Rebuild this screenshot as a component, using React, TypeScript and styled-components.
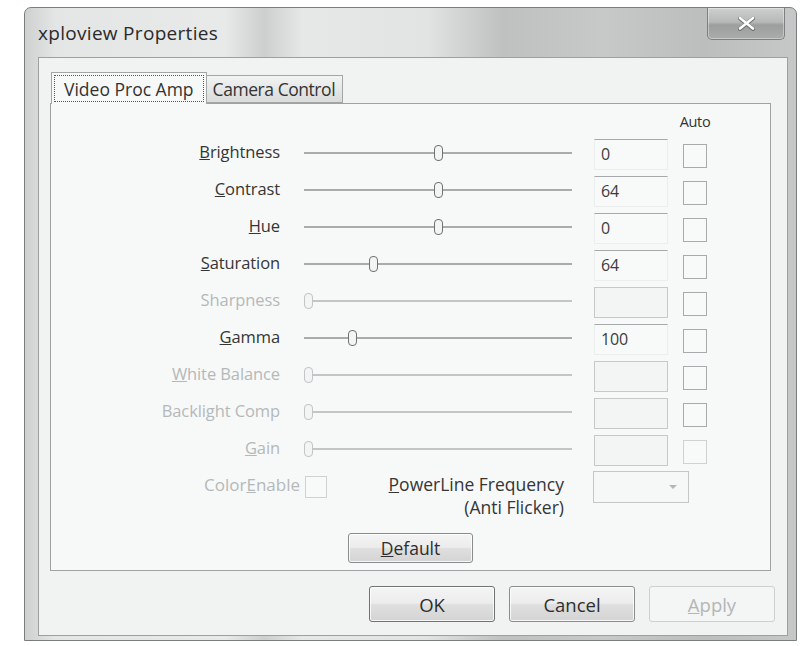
import React from "react";
import styled, { createGlobalStyle } from "styled-components";

const Global = createGlobalStyle`
  html, body { margin: 0; padding: 0; background: #ffffff; }
  body {
    width: 801px;
    height: 646px;
    overflow: hidden;
    font-family: "Open Sans", "Noto Sans", sans-serif;
  }
  * { box-sizing: border-box; }
`;

const Window = styled.div`
  margin: 7px 0 0 24px;
  width: 773px;
  height: 634px;
  border: 1px solid #7a7d7d;
  border-radius: 7px 7px 0 0;
  background: linear-gradient(
    90deg,
    #cfd1d1 0%,
    #e4e5e5 4%,
    #e8e9e9 26%,
    #cdcfcf 31%,
    #e6e7e7 36%,
    #e2e3e3 52%,
    #bfc1c1 62%,
    #c7c9c9 75%,
    #bcbebe 88%,
    #c6c8c8 100%
  );
  display: flex;
  flex-direction: column;
  padding: 0 8px 4px 13px;
  overflow: hidden;
`;

const TitleBar = styled.div`
  height: 49px;
  flex-shrink: 0;
  display: flex;
  justify-content: space-between;
  align-items: flex-start;
`;

const Title = styled.div`
  margin-top: 13px;
  font-size: 19px;
  line-height: 24px;
  color: #2a2a2a;
  letter-spacing: 0.3px;
`;

const CloseButton = styled.div`
  margin-right: 3px;
  width: 78px;
  height: 32px;
  border: 1px solid #7d8080;
  border-top: none;
  border-radius: 0 0 5px 5px;
  background: linear-gradient(180deg, #cdcfcf 0%, #b7b9b9 45%, #9c9e9e 55%, #abadad 100%);
  box-shadow: inset 0 0 0 1px rgba(255, 255, 255, 0.35);
  display: flex;
  align-items: center;
  justify-content: center;
`;

const Client = styled.div`
  width: 750px;
  flex: 1;
  border: 1px solid #9ca0a0;
  background: #f1f3f3;
  padding: 14px 16px 0 11px;
  display: flex;
  flex-direction: column;
`;

const TabStrip = styled.div`
  height: 31px;
  display: flex;
  align-items: flex-end;
  padding-left: 1px;
`;

const Tab = styled.div<{ $active?: boolean }>`
  position: relative;
  z-index: ${(p) => (p.$active ? 1 : 0)};
  height: ${(p) => (p.$active ? "32px" : "28px")};
  margin-bottom: ${(p) => (p.$active ? "-1px" : "0")};
  padding: ${(p) => (p.$active ? "2px" : "0 7px 0 6px")};
  border: 1px solid #a3a6a6;
  border-bottom: ${(p) => (p.$active ? "none" : "1px solid #a3a6a6")};
  border-left: ${(p) => (p.$active ? "1px solid #a3a6a6" : "none")};
  background: ${(p) =>
    p.$active ? "#f7f9f9" : "linear-gradient(180deg, #f2f3f3 0%, #e6e7e7 50%, #d9dbdb 100%)"};
  font-size: 17.5px;
  letter-spacing: ${(p) => (p.$active ? "0px" : "-0.45px")};
  color: #333;
  display: flex;
  align-items: center;
  white-space: nowrap;
`;

const FocusRect = styled.div`
  height: 100%;
  padding: 0 9px;
  border: 1px dotted #555;
  display: flex;
  align-items: center;
`;

const Panel = styled.div`
  width: 721px;
  height: 468px;
  flex-shrink: 0;
  border: 1px solid #9ea2a2;
  background: #f7f9f9;
  padding: 8px 0 0 0;
  display: flex;
  flex-direction: column;
`;

const Grid = styled.div`
  display: grid;
  grid-template-columns: 249px 294px 89px 24px;
  height: 31px;
`;

const HeaderGrid = styled(Grid)`
  height: 20px;
  margin-bottom: 7px;
`;

const AutoHead = styled.div`
  grid-column: 4;
  justify-self: center;
  font-size: 14.5px;
  line-height: 20px;
  color: #333;
  white-space: nowrap;
  letter-spacing: -0.3px;
`;

const Rows = styled.div`
  display: flex;
  flex-direction: column;
  gap: 6px;
`;

const Label = styled.div<{ $disabled?: boolean }>`
  align-self: center;
  margin-bottom: 5px;
  padding-right: 20px;
  text-align: right;
  font-size: 16.5px;
  line-height: 22px;
  letter-spacing: -0.1px;
  color: ${(p) => (p.$disabled ? "#b5b8b8" : "#353535")};
  white-space: nowrap;
`;

const SliderCell = styled.div`
  align-self: center;
  margin-bottom: 3px;
  padding: 0 22px 0 4px;
`;

const Track = styled.div<{ $disabled?: boolean }>`
  position: relative;
  height: 16px;
  &::before {
    content: "";
    position: absolute;
    left: 0;
    right: 0;
    top: 7px;
    height: 2px;
    background: ${(p) => (p.$disabled ? "#c3c6c6" : "#a9acac")};
  }
`;

const Thumb = styled.div<{ $disabled?: boolean }>`
  position: absolute;
  top: 0;
  width: 9px;
  height: 16px;
  border: 1.5px solid ${(p) => (p.$disabled ? "#c2c5c5" : "#6f7272")};
  border-radius: 4px;
  background: #f3f4f4;
`;

const ValueBox = styled.div<{ $disabled?: boolean }>`
  width: 74px;
  height: 31px;
  border: 1px solid ${(p) => (p.$disabled ? "#c6c9c9" : "#eceeee")};
  border-top: 1px solid ${(p) => (p.$disabled ? "#c6c9c9" : "#a6a9a9")};
  background: ${(p) => (p.$disabled ? "#f3f5f5" : "#f8fafa")};
  padding: 0 0 0 6px;
  font-size: 16px;
  line-height: 29px;
  color: #3c3c3c;
  letter-spacing: -0.2px;
`;

const CheckBox = styled.div<{ $disabled?: boolean; $size?: number }>`
  margin-top: 5px;
  width: ${(p) => p.$size ?? 24}px;
  height: ${(p) => p.$size ?? 24}px;
  border: 1.5px solid ${(p) => (p.$disabled ? "#cfd2d2" : "#a8abab")};
  background: #f8f9f9;
`;

const BottomRow = styled.div`
  margin-top: 5px;
  height: 48px;
  display: flex;
  align-items: flex-start;
`;

const ColorGroup = styled.div`
  width: 276px;
  display: flex;
  justify-content: flex-end;
  gap: 5px;
`;

const SmallLabel = styled.div<{ $disabled?: boolean }>`
  margin-top: 3px;
  font-size: 17px;
  line-height: 22px;
  letter-spacing: 0px;
  color: ${(p) => (p.$disabled ? "#b5b8b8" : "#353535")};
  white-space: nowrap;
`;

const PowerLabel = styled.div`
  width: 237px;
  margin-top: 2px;
  text-align: right;
  font-size: 17.5px;
  line-height: 23px;
  letter-spacing: 0px;
  color: #353535;
  white-space: nowrap;
`;

const Dropdown = styled.div`
  margin-left: 29px;
  width: 96px;
  height: 32px;
  border: 1px solid #c4c7c7;
  background: #f6f7f7;
  display: flex;
  align-items: center;
  justify-content: flex-end;
  padding-right: 11px;
`;

const Arrow = styled.div`
  width: 0;
  height: 0;
  border-left: 4px solid transparent;
  border-right: 4px solid transparent;
  border-top: 4px solid #b4b7b7;
`;

const CenterRow = styled.div`
  margin-top: 14px;
  display: flex;
  justify-content: center;
`;

const Button = styled.div<{ $w?: number; $h?: number; $disabled?: boolean; $default?: boolean; $fs?: number }>`
  width: ${(p) => p.$w ?? 126}px;
  height: ${(p) => p.$h ?? 36}px;
  border: 1px solid ${(p) => (p.$disabled ? "#cdd0d0" : p.$default ? "#6f7373" : "#8a8d8d")};
  border-radius: 3px;
  box-shadow: ${(p) =>
    p.$disabled ? "none" : "inset 0 0 0 1px rgba(255,255,255,0.8)"};
  background: ${(p) =>
    p.$disabled
      ? "#f4f5f5"
      : "linear-gradient(180deg, #f4f4f4 0%, #ececec 48%, #dfdfdf 52%, #d4d4d4 100%)"};
  display: flex;
  align-items: center;
  justify-content: center;
  font-size: ${(p) => p.$fs ?? 18.5}px;
  letter-spacing: 0px;
  color: ${(p) => (p.$disabled ? "#b3b6b6" : "#2e2e2e")};
`;

const ButtonRow = styled.div`
  margin-top: 15px;
  margin-right: -4px;
  display: flex;
  justify-content: flex-end;
  gap: 14px;
`;

type RowData = {
  label: string;
  mnemonic: number;
  value: string;
  pos: number;
  enabled: boolean;
  autoDisabled?: boolean;
};

const rows: RowData[] = [
  { label: "Brightness", mnemonic: 0, value: "0", pos: 0.5, enabled: true },
  { label: "Contrast", mnemonic: 0, value: "64", pos: 0.5, enabled: true },
  { label: "Hue", mnemonic: 0, value: "0", pos: 0.5, enabled: true },
  { label: "Saturation", mnemonic: 0, value: "64", pos: 0.25, enabled: true },
  { label: "Sharpness", mnemonic: -1, value: "", pos: 0, enabled: false },
  { label: "Gamma", mnemonic: 0, value: "100", pos: 0.168, enabled: true },
  { label: "White Balance", mnemonic: 0, value: "", pos: 0, enabled: false },
  { label: "Backlight Comp", mnemonic: -1, value: "", pos: 0, enabled: false },
  { label: "Gain", mnemonic: 0, value: "", pos: 0, enabled: false, autoDisabled: true },
];

function Mnemonic({ text, index }: { text: string; index: number }) {
  if (index < 0) return <>{text}</>;
  return (
    <>
      {text.slice(0, index)}
      <u>{text[index]}</u>
      {text.slice(index + 1)}
    </>
  );
}

function Slider({ pos, disabled }: { pos: number; disabled: boolean }) {
  return (
    <Track $disabled={disabled}>
      <Thumb $disabled={disabled} style={{ left: `calc(${pos} * (100% - 9px))` }} />
    </Track>
  );
}

function CloseGlyph() {
  return (
    <svg width="19" height="15" viewBox="0 0 19 15">
      <path d="M3 2.5 L16 13 M16 2.5 L3 13" stroke="#6d7070" strokeWidth="4" strokeLinecap="round" />
      <path d="M3 2 L16 12.5 M16 2 L3 12.5" stroke="#ffffff" strokeWidth="2.6" strokeLinecap="round" />
    </svg>
  );
}

export default function App() {
  return (
    <>
      <Global />
      <Window>
        <TitleBar>
          <Title>xploview Properties</Title>
          <CloseButton>
            <CloseGlyph />
          </CloseButton>
        </TitleBar>
        <Client>
          <TabStrip>
            <Tab $active>
              <FocusRect>Video Proc Amp</FocusRect>
            </Tab>
            <Tab>Camera Control</Tab>
          </TabStrip>
          <Panel>
            <HeaderGrid>
              <AutoHead>Auto</AutoHead>
            </HeaderGrid>
            <Rows>
              {rows.map((r) => (
                <Grid key={r.label}>
                  <Label $disabled={!r.enabled}>
                    <Mnemonic text={r.label} index={r.mnemonic} />
                  </Label>
                  <SliderCell>
                    <Slider pos={r.pos} disabled={!r.enabled} />
                  </SliderCell>
                  <ValueBox $disabled={!r.enabled}>{r.value}</ValueBox>
                  <CheckBox $disabled={r.autoDisabled} />
                </Grid>
              ))}
            </Rows>
            <BottomRow>
              <ColorGroup>
                <SmallLabel $disabled>
                  Color<u>E</u>nable
                </SmallLabel>
                <CheckBox $size={22} $disabled />
              </ColorGroup>
              <PowerLabel>
                <u>P</u>owerLine Frequency
                <br />
                (Anti Flicker)
              </PowerLabel>
              <Dropdown>
                <Arrow />
              </Dropdown>
            </BottomRow>
            <CenterRow>
              <Button $w={125} $h={30} $fs={17.5}>
                <u>D</u>efault
              </Button>
            </CenterRow>
          </Panel>
          <ButtonRow>
            <Button $default>OK</Button>
            <Button>Cancel</Button>
            <Button $disabled>
              <u>A</u>pply
            </Button>
          </ButtonRow>
        </Client>
      </Window>
    </>
  );
}
